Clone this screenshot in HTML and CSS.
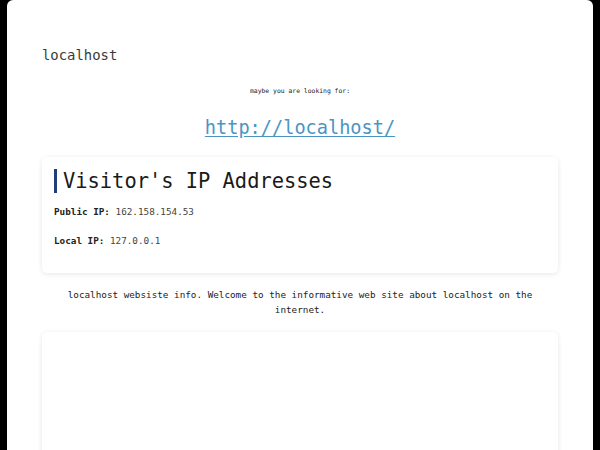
FILE: index.html
```html
<!DOCTYPE html>
<html lang="en">
<head>
<meta charset="utf-8">
<title>localhost</title>
<link rel="stylesheet" href="styles.css">
</head>
<body>
<div class="page">
  <div class="site-title">localhost</div>
  <div class="hint">maybe you are looking for:</div>
  <div class="link-row"><a class="link" href="#">http://localhost/</a></div>
  <section class="card">
    <h2 class="card-heading">Visitor's IP Addresses</h2>
    <p class="ip-line"><b>Public IP:</b> 162.158.154.53</p>
    <p class="ip-line ip-local"><b>Local IP:</b> 127.0.0.1</p>
  </section>
  <p class="info">localhost websiste info. Welcome to the informative web site about localhost on the internet.</p>
  <section class="card card-empty"></section>
</div>
</body>
</html>
```

FILE: styles.css
```css
html, body {
  margin: 0;
  padding: 0;
  background: #000;
  height: 100%;
  overflow: hidden;
}
.page {
  margin: 0 7px;
  height: 450px;
  background: #fff;
  border-radius: 6px 6px 0 0;
  padding: 0 35px;
  font-family: "DejaVu Sans Mono", "Liberation Mono", monospace;
  color: #333;
  overflow: hidden;
  box-sizing: border-box;
}
.site-title {
  margin-top: 45px;
  font-size: 13.9px;
  line-height: 20px;
  color: #3a3a3a;
}
.hint {
  margin-top: 21px;
  font-size: 6.4px;
  line-height: 10px;
  text-align: center;
  color: #222;
}
.link-row {
  margin-top: 20px;
  line-height: 24px;
  text-align: center;
}
.link {
  font-size: 18.6px;
  color: #4a95c4;
  text-decoration: underline;
  text-underline-offset: 2px;
}
.card {
  margin-top: 16px;
  background: #fff;
  border-radius: 5px;
  box-shadow: 0 1px 5px rgba(0, 0, 0, 0.1);
  padding: 12px 12px 25px;
}
.card-heading {
  margin: 0;
  font-weight: normal;
  font-size: 20.4px;
  line-height: 24px;
  color: #1a1a1a;
  border-left: 3px solid #1d3f7a;
  padding-left: 6px;
}
.ip-line {
  margin: 12px 0 0;
  font-size: 9.3px;
  line-height: 14px;
  color: #444;
}
.ip-line b {
  color: #222;
}
.ip-local {
  margin-top: 15px;
}
.info {
  margin: 14px 0 0;
  font-size: 9.3px;
  line-height: 15px;
  text-align: center;
  color: #222;
}
.card-empty {
  margin-top: 15px;
  height: 130px;
  padding: 0;
}
```
